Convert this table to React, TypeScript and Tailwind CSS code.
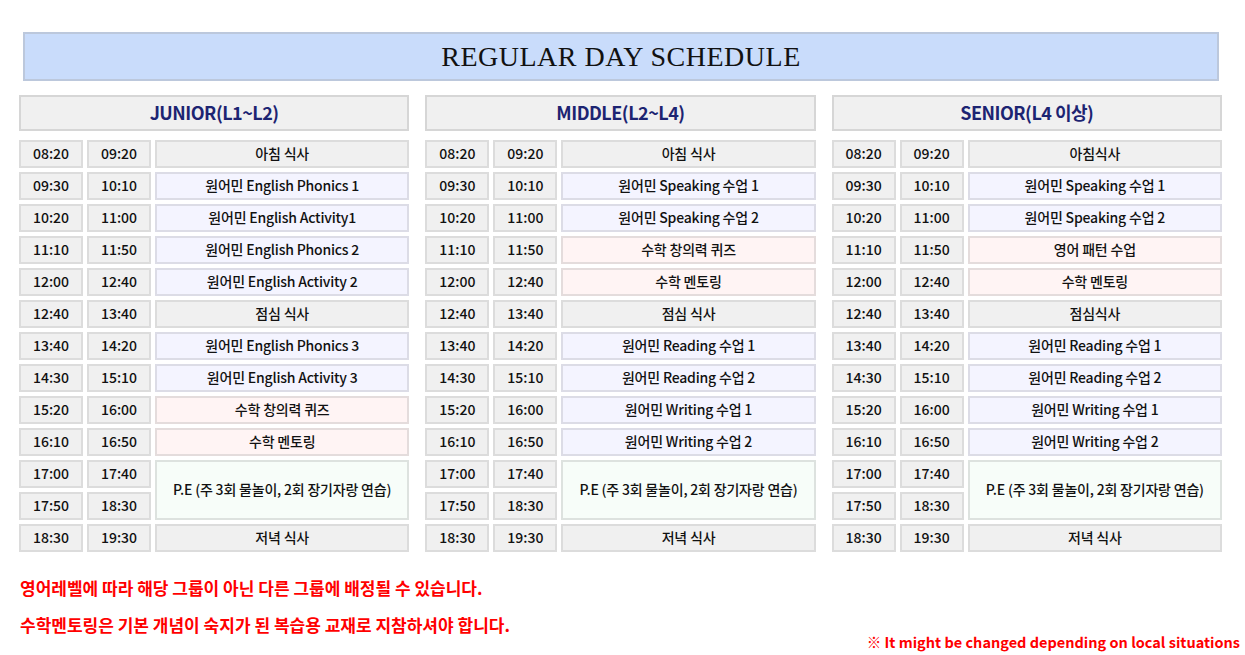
import React from 'react';

type Kind = 'meal' | 'eng' | 'math' | 'pe';

type Row = {
  start: string;
  end: string;
  title?: string;
  kind?: Kind;
  span?: boolean;
};

type Group = {
  name: string;
  rows: Row[];
};

const groups: Group[] = [
  {
    name: 'JUNIOR(L1~L2)',
    rows: [
      { start: '08:20', end: '09:20', title: '아침 식사', kind: 'meal' },
      { start: '09:30', end: '10:10', title: '원어민 English Phonics 1', kind: 'eng' },
      { start: '10:20', end: '11:00', title: '원어민 English Activity1', kind: 'eng' },
      { start: '11:10', end: '11:50', title: '원어민 English Phonics 2', kind: 'eng' },
      { start: '12:00', end: '12:40', title: '원어민 English Activity 2', kind: 'eng' },
      { start: '12:40', end: '13:40', title: '점심 식사', kind: 'meal' },
      { start: '13:40', end: '14:20', title: '원어민 English Phonics 3', kind: 'eng' },
      { start: '14:30', end: '15:10', title: '원어민 English Activity 3', kind: 'eng' },
      { start: '15:20', end: '16:00', title: '수학 창의력 퀴즈', kind: 'math' },
      { start: '16:10', end: '16:50', title: '수학 멘토링', kind: 'math' },
      { start: '17:00', end: '17:40', title: 'P.E (주 3회 물놀이, 2회 장기자랑 연습)', kind: 'pe', span: true },
      { start: '17:50', end: '18:30' },
      { start: '18:30', end: '19:30', title: '저녁 식사', kind: 'meal' },
    ],
  },
  {
    name: 'MIDDLE(L2~L4)',
    rows: [
      { start: '08:20', end: '09:20', title: '아침 식사', kind: 'meal' },
      { start: '09:30', end: '10:10', title: '원어민 Speaking 수업 1', kind: 'eng' },
      { start: '10:20', end: '11:00', title: '원어민 Speaking 수업 2', kind: 'eng' },
      { start: '11:10', end: '11:50', title: '수학 창의력 퀴즈', kind: 'math' },
      { start: '12:00', end: '12:40', title: '수학 멘토링', kind: 'math' },
      { start: '12:40', end: '13:40', title: '점심 식사', kind: 'meal' },
      { start: '13:40', end: '14:20', title: '원어민 Reading 수업 1', kind: 'eng' },
      { start: '14:30', end: '15:10', title: '원어민 Reading 수업 2', kind: 'eng' },
      { start: '15:20', end: '16:00', title: '원어민 Writing 수업 1', kind: 'eng' },
      { start: '16:10', end: '16:50', title: '원어민 Writing 수업 2', kind: 'eng' },
      { start: '17:00', end: '17:40', title: 'P.E (주 3회 물놀이, 2회 장기자랑 연습)', kind: 'pe', span: true },
      { start: '17:50', end: '18:30' },
      { start: '18:30', end: '19:30', title: '저녁 식사', kind: 'meal' },
    ],
  },
  {
    name: 'SENIOR(L4 이상)',
    rows: [
      { start: '08:20', end: '09:20', title: '아침식사', kind: 'meal' },
      { start: '09:30', end: '10:10', title: '원어민 Speaking 수업 1', kind: 'eng' },
      { start: '10:20', end: '11:00', title: '원어민 Speaking 수업 2', kind: 'eng' },
      { start: '11:10', end: '11:50', title: '영어 패턴 수업', kind: 'math' },
      { start: '12:00', end: '12:40', title: '수학 멘토링', kind: 'math' },
      { start: '12:40', end: '13:40', title: '점심식사', kind: 'meal' },
      { start: '13:40', end: '14:20', title: '원어민 Reading 수업 1', kind: 'eng' },
      { start: '14:30', end: '15:10', title: '원어민 Reading 수업 2', kind: 'eng' },
      { start: '15:20', end: '16:00', title: '원어민 Writing 수업 1', kind: 'eng' },
      { start: '16:10', end: '16:50', title: '원어민 Writing 수업 2', kind: 'eng' },
      { start: '17:00', end: '17:40', title: 'P.E (주 3회 물놀이, 2회 장기자랑 연습)', kind: 'pe', span: true },
      { start: '17:50', end: '18:30' },
      { start: '18:30', end: '19:30', title: '저녁 식사', kind: 'meal' },
    ],
  },
];

const kindClass: Record<Kind, string> = {
  meal: 'bg-[#f0f0f0] border-[#dcdcdc]',
  eng: 'bg-[#f4f4ff] border-[#dcdce6]',
  math: 'bg-[#fff4f4] border-[#e4dcdc]',
  pe: 'bg-[#f7fdf9] border-[#dde2df]',
};

const TimeCell = ({ value }: { value: string }) => (
  <div className="flex items-center justify-center border-2 border-[#dcdcdc] bg-[#f0f0f0] pb-[2px] text-[14px] font-medium text-[#111]">
    {value}
  </div>
);

const GroupTable = ({ group }: { group: Group }) => (
  <div className="flex flex-col">
    {/* group header */}
    <div className="flex h-[36px] items-center justify-center border-2 border-[#d6d6d6] bg-[#f0f0f0] pb-[2px] text-[18px] font-bold tracking-[-0.5px] text-[#1c2472]">
      {group.name}
    </div>

    <div className="mt-[9px] grid grid-cols-[64px_64px_1fr] auto-rows-[28px] gap-[4px]">
      {group.rows.map((row) => (
        <React.Fragment key={row.start + row.end}>
          <TimeCell value={row.start} />
          <TimeCell value={row.end} />
          {row.title && row.kind && (
            <div
              className={`flex items-center justify-center border-2 pb-[2px] text-[14px] font-medium tracking-[-0.2px] text-[#111] ${kindClass[row.kind]} ${
                row.span ? 'row-span-2' : ''
              }`}
            >
              {row.title}
            </div>
          )}
        </React.Fragment>
      ))}
    </div>
  </div>
);

const App = () => {
  return (
    <div
      className="min-h-screen w-[1245px] bg-white"
      style={{ fontFamily: '"Noto Sans CJK KR", "Noto Sans", sans-serif' }}
    >
      {/* Title */}
      <div className="px-[23px] pt-[32px] pr-[26px]">
        <div className="flex h-[49px] items-center justify-center border-2 border-[#bcc8dc] bg-[#c9dcfb]">
          <h1 className="text-[28px] text-[#111] tracking-[0.5px] [font-family:'Liberation_Serif',serif]">
            REGULAR DAY SCHEDULE
          </h1>
        </div>
      </div>

      {/* Tables */}
      <div className="mt-[14px] grid grid-cols-3 gap-[16px] pl-[19px] pr-[23px]">
        {groups.map((g) => (
          <GroupTable key={g.name} group={g} />
        ))}
      </div>

      {/* Notes */}
      <div className="mt-[24px] pl-[20px] text-[17px] font-bold leading-[24px] text-[#ff0000]">
        <p>영어레벨에 따라 해당 그룹이 아닌 다른 그룹에 배정될 수 있습니다.</p>
        <p className="mt-[13px]">수학멘토링은 기본 개념이 숙지가 된 복습용 교재로 지참하셔야 합니다.</p>
      </div>
      <div className="-mt-[6px] pr-[5px] text-right text-[14.5px] font-bold text-[#ff0000]">
        ※ It might be changed depending on local situations
      </div>
    </div>
  );
};

export default App;
